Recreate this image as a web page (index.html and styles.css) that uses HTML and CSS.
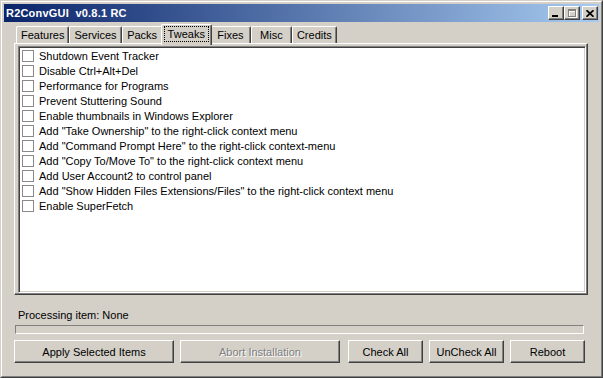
FILE: index.html
```html
<!DOCTYPE html>
<html lang="en">
<head>
  <meta charset="UTF-8" />
  <title>R2ConvGUI v0.8.1 RC</title>
  <link rel="stylesheet" href="styles.css">
</head>
<body>
  <div class="window">
    <div class="frame">
      <!-- Title bar -->
      <div class="titlebar">
        <span class="title">R2ConvGUI  v0.8.1 RC</span>
        <div class="caption-buttons">
          <button class="cap">
            <svg width="8" height="8" viewBox="0 0 8 8"><rect x="0" y="6" width="6" height="2" fill="#000"/></svg>
          </button>
          <button class="cap" disabled>
            <svg width="10" height="10" viewBox="0 0 10 10" shape-rendering="crispEdges">
              <path d="M1.5 1.5h7v7h-7z M1 2h8" fill="none" stroke="#fff" stroke-width="1" transform="translate(1 1)"/>
              <path d="M0.5 0.5h7v7h-7z M0 1.5h8" fill="none" stroke="#808080" stroke-width="1" transform="translate(1 1)"/>
            </svg>
          </button>
          <button class="cap close">
            <svg width="8" height="7" viewBox="0 0 8 7">
              <path d="M0.5 0.2L7.5 6.8M7.5 0.2L0.5 6.8" stroke="#000" stroke-width="1.7" fill="none"/>
            </svg>
          </button>
        </div>
      </div>

      <div class="client">
        <!-- Tabs -->
        <div class="tabs">
          <div class="tab">Features</div>
          <div class="tab">Services</div>
          <div class="tab">Packs</div>
          <div class="tab active"><span class="focus">Tweaks</span></div>
          <div class="tab">Fixes</div>
          <div class="tab">Misc</div>
          <div class="tab">Credits</div>
        </div>

        <div class="tab-page">
          <ul class="checklist">
            <li><span class="check"></span>Shutdown Event Tracker</li>
            <li><span class="check"></span>Disable Ctrl+Alt+Del</li>
            <li><span class="check"></span>Performance for Programs</li>
            <li><span class="check"></span>Prevent Stuttering Sound</li>
            <li><span class="check"></span>Enable thumbnails in Windows Explorer</li>
            <li><span class="check"></span>Add "Take Ownership" to the right-click context menu</li>
            <li><span class="check"></span>Add "Command Prompt Here" to the right-click context-menu</li>
            <li><span class="check"></span>Add "Copy To/Move To" to the right-click context menu</li>
            <li><span class="check"></span>Add User Account2 to control panel</li>
            <li><span class="check"></span>Add "Show Hidden Files Extensions/Files" to the right-click context menu</li>
            <li><span class="check"></span>Enable SuperFetch</li>
          </ul>
        </div>

        <!-- Status -->
        <div class="status">Processing item: None</div>
        <div class="progress"></div>

        <!-- Actions -->
        <div class="actions">
          <button class="btn wide">Apply Selected Items</button>
          <button class="btn wide" disabled>Abort Installation</button>
          <button class="btn small push">Check All</button>
          <button class="btn small">UnCheck All</button>
          <button class="btn small">Reboot</button>
        </div>
      </div>
    </div>
  </div>
</body>
</html>
```

FILE: styles.css
```css
* {
  margin: 0;
  padding: 0;
  box-sizing: border-box;
}

body {
  font-family: "Liberation Sans", Arial, sans-serif;
  font-size: 11px;
  background: #d4d0c8;
  color: #000;
}

/* Window frame */
.window {
  width: 603px;
  height: 378px;
  border: 1px solid;
  border-color: #d4d0c8 #404040 #404040 #d4d0c8;
}

.frame {
  height: 100%;
  border: 1px solid;
  border-color: #fff #808080 #808080 #fff;
  padding: 2px;
  display: flex;
  flex-direction: column;
}

/* Title bar */
.titlebar {
  height: 18px;
  display: flex;
  align-items: center;
  padding: 0 1px 0 2px;
  background: linear-gradient(to right, #0a246a, #a6caf0);
}

.title {
  flex: 1;
  color: #fff;
  font-weight: bold;
  letter-spacing: 0.2px;
  white-space: pre;
}

.caption-buttons {
  display: flex;
}

.cap {
  width: 16px;
  height: 14px;
  display: flex;
  align-items: center;
  justify-content: center;
  background: #d4d0c8;
  border: 1px solid;
  border-color: #fff #404040 #404040 #fff;
  box-shadow: inset -1px -1px #808080;
}

.cap svg {
  display: block;
}

.cap.close {
  margin-left: 2px;
}

/* Client area */
.client {
  flex: 1;
  display: flex;
  flex-direction: column;
  padding: 2px 11px 11px 10px;
}

.tabs {
  display: flex;
  align-items: flex-start;
  height: 20px;
  margin-bottom: -1px;
  padding-left: 2px;
}

.tab {
  height: 18px;
  min-width: 41px;
  margin-top: 2px;
  padding: 0 4px;
  text-align: center;
  line-height: 16px;
  border: 1px solid;
  border-bottom: none;
  border-color: #fff #404040 #fff #fff;
  border-radius: 2px 2px 0 0;
  box-shadow: inset -1px 0 #808080;
  background: #d4d0c8;
}

.tab.active {
  position: relative;
  z-index: 1;
  height: 21px;
  margin: 0 -2px;
  padding: 2px 3px 0;
}

.focus {
  display: block;
  padding: 0 3px;
  line-height: 14px;
  outline: 1px dotted #000;
}

/* Tab page with the checked list */
.tab-page {
  height: 252px;
  display: flex;
  padding: 2px 1px 1px 3px;
  border: 1px solid;
  border-color: #fff #404040 #404040 #fff;
  box-shadow: inset -1px -1px #808080;
}

.checklist {
  flex: 1;
  list-style: none;
  background: #fff;
  padding: 1px 2px;
  border: 1px solid;
  border-color: #808080 #fff #fff #808080;
  box-shadow: inset 1px 1px #404040, inset -1px -1px #d4d0c8;
}

.checklist li {
  height: 15px;
  display: flex;
  align-items: center;
  white-space: nowrap;
}

.check {
  width: 12px;
  height: 12px;
  margin: 0 5px 0 1px;
  border: 1px solid #8a8a8a;
  background: #fff;
}

/* Status + progress */
.status {
  margin-top: 14px;
  padding-left: 4px;
  line-height: 13px;
}

.progress {
  height: 9px;
  margin: 3px 4px 0 1px;
  border: 1px solid;
  border-color: #808080 #fff #fff #808080;
}

/* Buttons */
.actions {
  display: flex;
  gap: 6px;
  margin-top: 6px;
}

.btn {
  height: 23px;
  font-family: inherit;
  font-size: 11px;
  color: #000;
  background: #d4d0c8;
  border: 1px solid;
  border-color: #fff #404040 #404040 #fff;
  box-shadow: inset -1px -1px #808080;
}

.btn.wide {
  width: 160px;
}

.btn.small {
  width: 75px;
}

.btn.push {
  margin-left: 2px;
}

.btn:disabled {
  color: #808080;
  text-shadow: 1px 1px #fff;
}
```
